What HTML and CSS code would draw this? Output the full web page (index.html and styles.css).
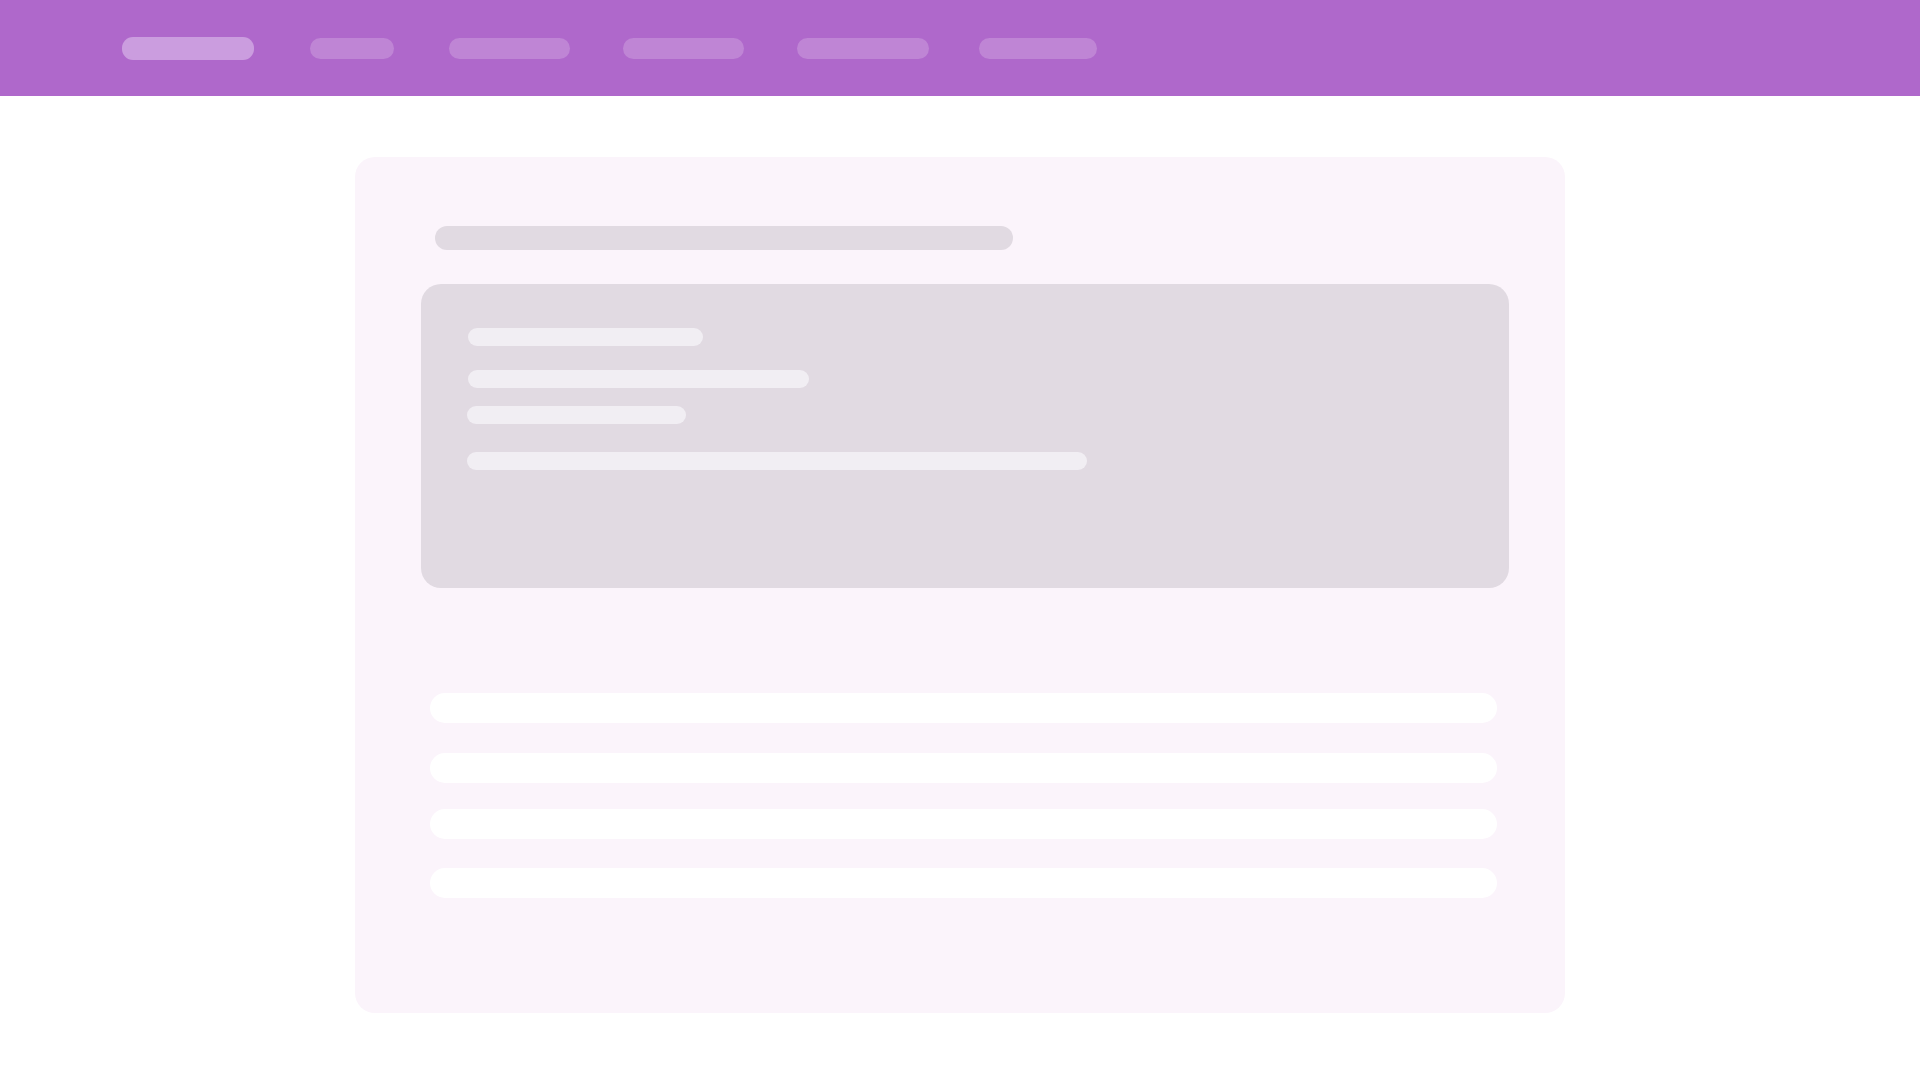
FILE: index.html
```html
<!DOCTYPE html>
<html lang="en">
<head>
<meta charset="utf-8">
<title>Loading</title>
<link rel="stylesheet" href="styles.css">
</head>
<body>
<header class="topnav">
  <span class="nav-pill nav-pill--active" style="width:132px"></span>
  <span class="nav-pill" style="width:84px;margin-left:56px"></span>
  <span class="nav-pill" style="width:121px;margin-left:55px"></span>
  <span class="nav-pill" style="width:121px;margin-left:53px"></span>
  <span class="nav-pill" style="width:132px;margin-left:53px"></span>
  <span class="nav-pill" style="width:118px;margin-left:50px"></span>
</header>
<main class="page">
  <section class="card">
    <div class="title-bar"></div>
    <div class="panel">
      <div class="panel-line" style="width:235px"></div>
      <div class="panel-line panel-line--b" style="width:341px"></div>
      <div class="panel-line panel-line--c" style="width:219px"></div>
      <div class="panel-line panel-line--d" style="width:620px"></div>
    </div>
    <div class="rows">
      <div class="row"></div>
      <div class="row row--2"></div>
      <div class="row row--3"></div>
      <div class="row row--4"></div>
    </div>
  </section>
</main>
</body>
</html>
```
FILE: styles.css
```css
* { box-sizing: border-box; }
html, body {
  margin: 0;
  padding: 0;
  background: #ffffff;
  font-family: "Liberation Sans", Arial, sans-serif;
}
.topnav {
  height: 96px;
  background: #af68cb;
  display: flex;
  align-items: center;
  padding-left: 122px;
}
.nav-pill {
  display: block;
  height: 21px;
  border-radius: 11px;
  background: #bf85d5;
  flex: none;
}
.nav-pill--active {
  height: 23px;
  background: #cb9ddf;
}
.page {
  padding-top: 61px;
  display: flex;
  justify-content: center;
}
.card {
  width: 1210px;
  height: 856px;
  background: #fbf4fb;
  border-radius: 20px;
  padding-top: 69px;
}
.title-bar {
  margin-left: 80px;
  width: 578px;
  height: 24px;
  border-radius: 12px;
  background: #e1dae2;
}
.panel {
  margin-top: 34px;
  margin-left: 66px;
  width: 1088px;
  height: 304px;
  border-radius: 20px;
  background: #e1dae2;
  padding-top: 44px;
  padding-left: 47px;
}
.panel-line {
  height: 18px;
  border-radius: 9px;
  background: #f1eef3;
}
.panel-line--b { margin-top: 24px; }
.panel-line--c { margin-top: 18px; margin-left: -1px; }
.panel-line--d { margin-top: 28px; margin-left: -1px; }
.rows {
  margin-top: 105px;
  margin-left: 75px;
  width: 1067px;
}
.row {
  height: 30px;
  border-radius: 15px;
  background: #ffffff;
}
.row--2 { margin-top: 30px; }
.row--3 { margin-top: 26px; }
.row--4 { margin-top: 29px; }
```
